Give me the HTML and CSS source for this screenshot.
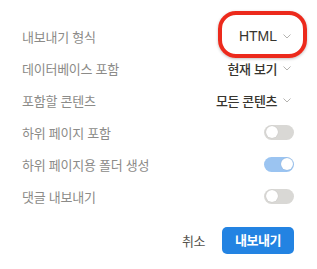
FILE: index.html
```html
<!DOCTYPE html>
<html lang="ko">
<head>
<meta charset="UTF-8">
<meta name="viewport" content="width=device-width, initial-scale=1.0">
<title>내보내기</title>
<link rel="stylesheet" href="styles.css">
</head>
<body>
<div id="export-dialog">
  <div class="option-row">
    <div class="option-label">내보내기 형식</div>
    <div class="option-select highlighted"><span class="format-value">HTML</span><svg class="chevron" width="8" height="5" viewBox="0 0 8 5"><path d="M0.5 0.5 L4 4 L7.5 0.5" fill="none" stroke="#b4b3b0" stroke-width="1"/></svg></div>
  </div>
  <div class="option-row">
    <div class="option-label">데이터베이스 포함</div>
    <div class="option-select">현재 보기<svg class="chevron" width="8" height="5" viewBox="0 0 8 5"><path d="M0.5 0.5 L4 4 L7.5 0.5" fill="none" stroke="#b4b3b0" stroke-width="1"/></svg></div>
  </div>
  <div class="option-row">
    <div class="option-label">포함할 콘텐츠</div>
    <div class="option-select">모든 콘텐츠<svg class="chevron" width="8" height="5" viewBox="0 0 8 5"><path d="M0.5 0.5 L4 4 L7.5 0.5" fill="none" stroke="#b4b3b0" stroke-width="1"/></svg></div>
  </div>
  <div class="option-row">
    <div class="option-label">하위 페이지 포함</div>
    <div class="toggle"><div class="toggle-knob"></div></div>
  </div>
  <div class="option-row">
    <div class="option-label">하위 페이지용 폴더 생성</div>
    <div class="toggle on"><div class="toggle-knob"></div></div>
  </div>
  <div class="option-row">
    <div class="option-label">댓글 내보내기</div>
    <div class="toggle"><div class="toggle-knob"></div></div>
  </div>

  <!-- Buttons -->
  <div class="dialog-buttons">
    <div class="cancel-button">취소</div>
    <div class="export-button">내보내기</div>
  </div>
</div>
</body>
</html>
```

FILE: styles.css
```css
body {
  margin: 0;
  background-color: #ffffff;
  font-family: "Liberation Sans", "Noto Sans CJK KR", sans-serif;
}

#export-dialog {
  padding: 20px 23px 0 22px;
}

.option-row {
  display: flex;
  justify-content: space-between;
  align-items: center;
  height: 32px;
}

.option-label {
  font-size: 13px;
  letter-spacing: -0.25px;
  color: #8c8b88;
}

.option-select {
  position: relative;
  display: flex;
  align-items: center;
  font-size: 13px;
  letter-spacing: -0.4px;
  font-weight: 500;
  color: #37352f;
  margin-right: 3px;
}

.format-value {
  font-size: 14px;
  letter-spacing: 0;
}

.chevron {
  margin-left: 6px;
}

/* red annotation circle drawn over the first select */
.option-select.highlighted::after {
  content: "";
  position: absolute;
  left: -21px;
  right: -16px;
  top: -17px;
  bottom: -14px;
  border: 4px solid #ec2a1c;
  border-radius: 18px;
  box-shadow: 0 1px 3px rgba(0, 0, 0, 0.25);
}

.toggle {
  width: 30px;
  height: 15px;
  border-radius: 8px;
  background-color: #d9d8d5;
  display: flex;
  align-items: center;
  padding: 0 1.5px;
  box-sizing: border-box;
}

.toggle.on {
  background-color: #9bc4f1;
  justify-content: flex-end;
}

.toggle-knob {
  width: 12px;
  height: 12px;
  border-radius: 50%;
  background-color: #ffffff;
  box-shadow: 0 0 1px rgba(0, 0, 0, 0.2);
}

.dialog-buttons {
  display: flex;
  justify-content: flex-end;
  align-items: center;
  gap: 17px;
  margin-top: 15px;
}

.cancel-button {
  font-size: 13px;
  letter-spacing: -0.5px;
  color: #55534e;
}

.export-button {
  width: 72px;
  height: 27px;
  line-height: 27px;
  text-align: center;
  border-radius: 5px;
  background-color: #2383e2;
  color: #ffffff;
  font-size: 13px;
  letter-spacing: -0.5px;
  font-weight: 700;
}
```
